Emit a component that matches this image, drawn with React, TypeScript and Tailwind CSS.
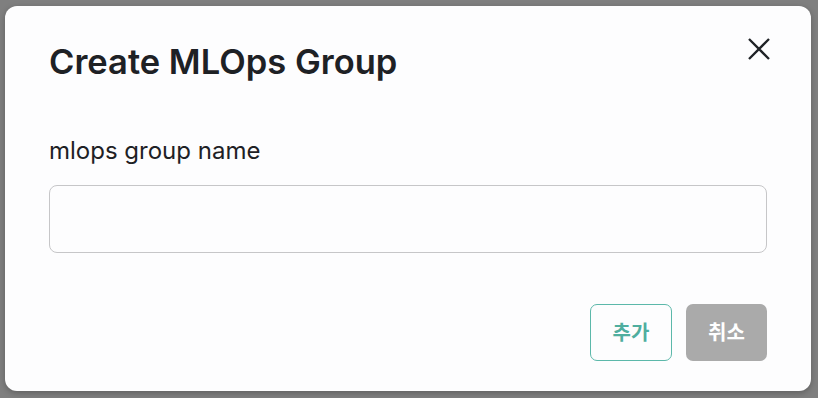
import { useState } from "react";

function CloseIcon() {
  return (
    <svg width="24" height="24" viewBox="0 0 24 24" fill="none">
      <path
        d="M2 2 22 22M22 2 2 22"
        stroke="#1f2226"
        strokeWidth="2.3"
        strokeLinecap="butt"
      />
    </svg>
  );
}

export default function App() {
  const [name, setName] = useState("");

  return (
    <div
      className="h-[398px] w-[818px] bg-[#7f7f7f] pl-[5px] pt-[6px]"
      style={{ fontFamily: "Inter, 'Noto Sans CJK KR', sans-serif" }}
    >
      <div className="flex h-[385px] w-[806px] flex-col rounded-[12px] bg-[#fdfdfe] px-[44px] shadow-[0_2px_6px_rgba(0,0,0,0.25)]">
        <div className="flex items-start justify-between pt-[36px]">
          <h2 className="text-[34.5px] font-semibold leading-[40px] text-[#1e2125]">
            Create MLOps Group
          </h2>
          <button className="mr-[-4px] mt-[-5px]" aria-label="close">
            <CloseIcon />
          </button>
        </div>

        <label className="mt-[55px] text-[24px] leading-[28px] text-[#1e2125]">
          mlops group name
        </label>

        <input
          value={name}
          onChange={(e) => setName(e.target.value)}
          className="mt-[20px] h-[68px] w-full rounded-[8px] border border-[#c6c6c8] bg-transparent px-4 text-[18px] outline-none"
        />

        <div className="mt-[51px] flex justify-end gap-[14px]">
          <button className="h-[57px] w-[82px] rounded-[7px] border border-[#5cb8aa] text-[20px] font-bold text-[#4fae9f]">
            추가
          </button>
          <button className="h-[57px] w-[81px] rounded-[7px] bg-[#aaaaaa] text-[20px] font-bold text-white">
            취소
          </button>
        </div>
      </div>
    </div>
  );
}
